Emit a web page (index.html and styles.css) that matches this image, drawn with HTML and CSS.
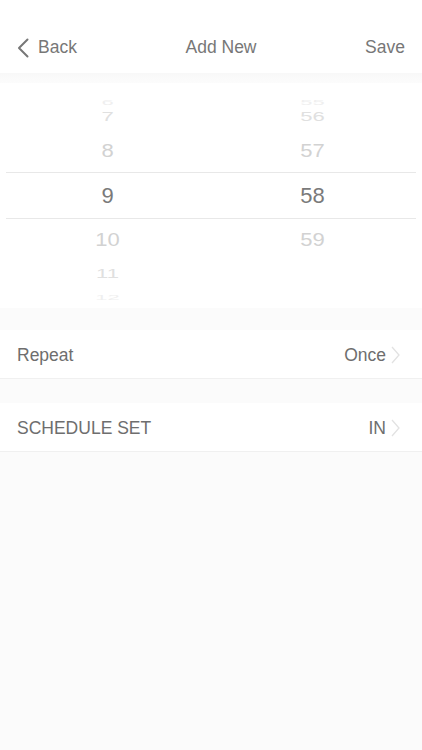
FILE: index.html
```html
<!DOCTYPE html>
<html>
<head>
<meta charset="utf-8">
<link rel="stylesheet" href="styles.css">
</head>
<body>
<header class="nav">
  <div class="nav-back">
    <svg class="back-icon" width="14" height="20" viewBox="0 0 14 20"><path d="M11.5 1.5 L3 10 L11.5 18.5" fill="none" stroke="#777" stroke-width="2" stroke-linecap="round" stroke-linejoin="round"/></svg>
    <span>Back</span>
  </div>
  <div class="nav-title">Add New</div>
  <div class="nav-save">Save</div>
</header>
<div class="shade"></div>
<section class="picker">
  <div class="prow r6"><span>6</span><span>55</span></div>
  <div class="prow r7"><span>7</span><span>56</span></div>
  <div class="prow r8"><span>8</span><span>57</span></div>
  <div class="prow sel"><span>9</span><span>58</span></div>
  <div class="prow r8"><span>10</span><span>59</span></div>
  <div class="prow r11"><span>11</span><span></span></div>
  <div class="prow r12"><span>12</span><span></span></div>
</section>
<div class="gap first"></div>
<div class="row">
  <span class="label">Repeat</span>
  <span class="value">Once<svg class="chev" width="9" height="18" viewBox="0 0 9 18"><path d="M1 1 L8 9 L1 17" fill="none" stroke="#e2e2e2" stroke-width="1.3"/></svg></span>
</div>
<div class="gap"></div>
<div class="row">
  <span class="label">SCHEDULE SET</span>
  <span class="value">IN<svg class="chev" width="9" height="18" viewBox="0 0 9 18"><path d="M1 1 L8 9 L1 17" fill="none" stroke="#e2e2e2" stroke-width="1.3"/></svg></span>
</div>
</body>
</html>
```
FILE: styles.css
```css
html, body {
  margin: 0;
  padding: 0;
}
body {
  background: #fbfbfb;
  font-family: "Liberation Sans", Arial, sans-serif;
  color: #777;
  width: 422px;
  min-height: 750px;
}
.nav {
  background: #fff;
  height: 73px;
  box-sizing: border-box;
  padding: 22px 17px 0 16px;
  display: flex;
  justify-content: space-between;
  align-items: center;
  font-size: 17.5px;
  color: #777;
}
.nav-back {
  display: flex;
  align-items: center;
  gap: 8px;
}
.back-icon {
  display: block;
}
.shade {
  height: 10px;
  background: linear-gradient(#f8f8f8, #fcfcfc);
}
.picker {
  background: #fff;
  padding: 9px 6px 11px;
  display: flex;
  flex-direction: column;
}
.prow {
  display: grid;
  grid-template-columns: 1fr 1fr;
  align-items: center;
  text-align: center;
  font-size: 22px;
  line-height: 1;
}
.prow span {
  display: block;
  margin-left: -2px;
}
.r6 { height: 12px; color: #efefef; }
.r6 span { transform: scaleY(0.3); }
.r7 { height: 26px; color: #e0e0e0; }
.r7 span { transform: scaleY(0.62); }
.r8 { height: 42px; color: #d2d2d2; }
.r8 span { transform: scaleY(0.82); }
.sel {
  height: 47px;
  box-sizing: border-box;
  border-top: 1px solid #e8e8e8;
  border-bottom: 1px solid #e8e8e8;
  color: #7a7a7a;
}
.r11 { height: 26px; color: #e0e0e0; }
.r11 span { transform: scaleY(0.62); }
.r12 { height: 10px; color: #efefef; }
.r12 span { transform: scaleY(0.3); }
.gap {
  height: 24px;
}
.gap.first {
  height: 22px;
}
.row {
  background: #fff;
  height: 49px;
  box-sizing: border-box;
  border-bottom: 1px solid #f0f0f0;
  padding: 2px 22px 0 17px;
  display: flex;
  justify-content: space-between;
  align-items: center;
  font-size: 17.5px;
  color: #6e6e6e;
}
.value {
  display: flex;
  align-items: center;
  gap: 5px;
}
.chev {
  display: block;
}
```
